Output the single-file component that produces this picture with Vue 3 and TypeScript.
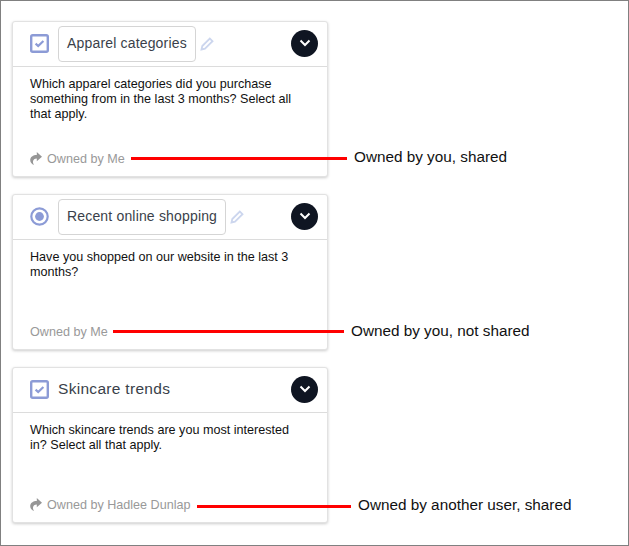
<script setup lang="ts">
interface Survey {
  id: number;
  title: string;
  kind: 'check' | 'radio';
  editable: boolean;
  question: string;
  owner: string;
  shared: boolean;
  note: string;
  lineLeft: number;
  lineWidth: number;
  lineDrop: number;
  noteTop: number;
}

const surveys: Survey[] = [
  {
    id: 1,
    title: 'Apparel categories',
    kind: 'check',
    editable: true,
    question: 'Which apparel categories did you purchase something from in the last 3 months? Select all that apply.',
    owner: 'Owned by Me',
    shared: true,
    note: 'Owned by you, shared',
    lineLeft: 119,
    lineWidth: 216,
    lineDrop: 2,
    noteTop: 127
  },
  {
    id: 2,
    title: 'Recent online shopping',
    kind: 'radio',
    editable: true,
    question: 'Have you shopped on our website in the last 3 months?',
    owner: 'Owned by Me',
    shared: false,
    note: 'Owned by you, not shared',
    lineLeft: 101,
    lineWidth: 231,
    lineDrop: 0,
    noteTop: 128
  },
  {
    id: 3,
    title: 'Skincare trends',
    kind: 'check',
    editable: false,
    question: 'Which skincare trends are you most interested in? Select all that apply.',
    owner: 'Owned by Hadlee Dunlap',
    shared: true,
    note: 'Owned by another user, shared',
    lineLeft: 185,
    lineWidth: 154,
    lineDrop: 2,
    noteTop: 129
  }
];
</script>

<template>
  <div class="page">
    <div v-for="s in surveys" :key="s.id" class="row">
      <div class="card">
        <div class="card-head">
          <svg v-if="s.kind === 'check'" class="type-icon" viewBox="0 0 19 19">
            <rect x="1.2" y="1.2" width="16.6" height="16.6" rx="1.5" fill="#fff" stroke="#8c9bd6" stroke-width="2.4" />
            <path d="M5.6 9.6 8.2 12 13.4 7" fill="none" stroke="#8c9bd6" stroke-width="2.2" />
          </svg>
          <svg v-else class="type-icon" viewBox="0 0 19 19">
            <circle cx="9.5" cy="9.5" r="8.2" fill="#fff" stroke="#8c9bd6" stroke-width="2.2" />
            <circle cx="9.5" cy="9.5" r="4.4" fill="#8c9bd6" />
          </svg>
          <div v-if="s.editable" class="title-box">{{ s.title }}</div>
          <div v-else class="title-plain">{{ s.title }}</div>
          <svg v-if="s.editable" class="pencil" viewBox="0 0 14 14">
            <path d="M1.5 12.5 2.3 9 9.8 1.5 12.5 4.2 5 11.7Z" fill="none" stroke="#ccd6ee" stroke-width="1.8" />
          </svg>
          <button class="toggle" type="button">
            <svg viewBox="0 0 12 8" width="12" height="8">
              <path d="M1.5 1.5 6 6l4.5-4.5" fill="none" stroke="#fff" stroke-width="2" />
            </svg>
          </button>
        </div>
        <div class="card-body">
          <p class="question">{{ s.question }}</p>
          <div class="owner">
            <svg v-if="s.shared" class="share" viewBox="0 0 12 13">
              <path d="M6.8 0 12 4.7 6.8 9.2V6.6C4.6 6.6 3.2 7.8 3 9.6 2.9 10.8 3.3 12 4 13 1.8 12.2.2 10.4.2 8 .2 5 3 3 6.8 3Z" fill="#969696" />
            </svg>
            <span>{{ s.owner }}</span>
          </div>
        </div>
      </div>
      <div class="note" :style="{ left: s.lineLeft + 'px', top: s.noteTop + 'px' }">
        <span class="line" :style="{ width: s.lineWidth + 'px', marginTop: s.lineDrop + 'px' }"></span>
        <span class="note-text">{{ s.note }}</span>
      </div>
    </div>
  </div>
</template>

<style>
html,
body {
  margin: 0;
  background: #fff;
}
</style>

<style scoped>
.page {
  box-sizing: border-box;
  width: 629px;
  height: 546px;
  padding: 20px 0 0 11px;
  border: 1px solid #808080;
  display: flex;
  flex-direction: column;
  gap: 17px;
  font-family: "Liberation Sans", Arial, sans-serif;
}

.row {
  position: relative;
}

.card {
  box-sizing: border-box;
  width: 316px;
  height: 156px;
  background: #fff;
  border: 1px solid #e2e2e2;
  border-radius: 3px;
  box-shadow: 0 1px 3px rgba(0, 0, 0, 0.2);
  display: flex;
  flex-direction: column;
}

.card-head {
  height: 45px;
  flex: none;
  box-sizing: border-box;
  border-bottom: 1px solid #dcdcdc;
  padding: 0 9px 0 17px;
  display: flex;
  align-items: center;
}

.type-icon {
  width: 19px;
  height: 19px;
  flex: none;
  margin: -2px 9px 0 0;
}

.title-box {
  box-sizing: border-box;
  height: 36px;
  line-height: 33px;
  padding: 0 8px;
  border: 1px solid #d5d5d5;
  border-radius: 4px;
  font-size: 14px;
  letter-spacing: 0.17px;
  color: #3a3f4a;
  white-space: nowrap;
}

.title-plain {
  padding-bottom: 2px;
  font-size: 15.5px;
  letter-spacing: 0.3px;
  color: #3a3f4a;
}

.pencil {
  width: 14px;
  height: 14px;
  margin-left: 4px;
}

.toggle {
  margin: -2px 0 0 auto;
  width: 27px;
  height: 27px;
  border: none;
  border-radius: 50%;
  background: #0f1522;
  padding: 0;
  display: flex;
  align-items: center;
  justify-content: center;
}

.card-body {
  flex: 1;
  padding: 10px 30px 10px 17px;
  display: flex;
  flex-direction: column;
  justify-content: space-between;
}

.question {
  margin: 0;
  font-size: 12.6px;
  line-height: 15px;
  color: #111;
}

.owner {
  display: flex;
  align-items: center;
  font-size: 12.6px;
  color: #999;
}

.share {
  width: 12px;
  height: 13px;
  margin: -2px 5px 0 0;
}

.note {
  position: absolute;
  display: flex;
  align-items: center;
  gap: 7px;
  white-space: nowrap;
}

.line {
  display: block;
  height: 3px;
  background: #ff0000;
}

.note-text {
  font-size: 15.3px;
  color: #111;
}
</style>
